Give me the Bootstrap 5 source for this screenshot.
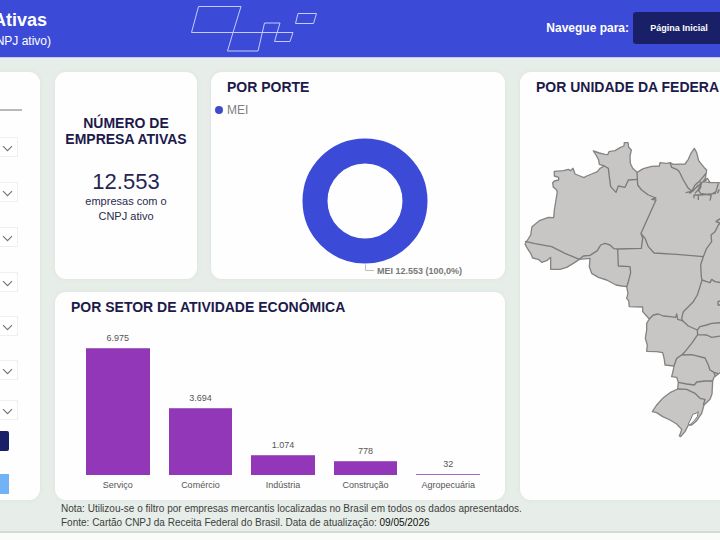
<!DOCTYPE html>
<html lang="pt-BR">
<head>
<meta charset="utf-8">
<meta name="viewport" content="width=device-width, initial-scale=1">
<title>Empresas Ativas</title>
<link href="https://cdn.jsdelivr.net/npm/bootstrap@5.3.0/dist/css/bootstrap.min.css" rel="stylesheet">
<style>
  body { font-family: "Liberation Sans", Arial, sans-serif; background: #fbfcfa; color: #1c1a4b; overflow-x: hidden; }
  .topbar { background: #3c4bd7; height: 58px; border-bottom: 1px solid #c3c9ee; }
  .brand { width: 51px; height: 52px; }
  .brand h1 { font-size: 18px; line-height: 24px; }
  .brand p { font-size: 12px; line-height: 18px; }
  .ornament { width: 128px; height: 50px; margin: 3px 0 0 139px; }
  .nav-caption { font-size: 12px; }
  .btn-home { background: #1a2068; color: #fff; font-size: 9px; font-weight: 700; line-height: 12px; width: 92px; height: 32px; margin-right: -5px; border-radius: 3px; padding: 0; }
  .btn-home:hover { background: #262d80; color: #fff; }
  .board { background: #e7ede8; padding-top: 14px; border-bottom: 2px solid #d3d9d4; }
  .board-grid { display: grid; grid-template-columns: 39px minmax(0, 450fr) minmax(0, 201fr); column-gap: 15px; padding-left: 0; }
  .panel { background: #fefefe; border: 0; border-radius: 11px; box-shadow: 0 0 4px #dbe2dc; }
  .board-grid { grid-template-columns: 40px minmax(0, 450fr) minmax(0, 200fr); }
  .panel-start { border-radius: 0 11px 11px 0; height: 428px; }
  .panel-end { border-radius: 11px 0 0 11px; height: 428px; }
  .panel-title { font-size: 14px; line-height: 16px; font-weight: 700; white-space: nowrap; padding: 7px 0 0 16px; }
  .company-count { padding-top: 43px; }
  .company-count .panel-title { padding: 0; }
  .rule { height: 2px; width: 22px; margin-top: 37px; background: #b9b9b9; }
  .filters { display: grid; grid-template-rows: 45px 45px 45px 44px 44px 40px 20px; margin-top: 26px; }
  .filters .form-select { width: 18px; height: 20px; padding: 0; border: 1px solid #efefef; border-left: 0; border-radius: 0; background-color: #fff; background-position: 2px 5px; background-size: 11px 11px;
    background-image: url("data:image/svg+xml,%3Csvg xmlns='http://www.w3.org/2000/svg' viewBox='0 0 11 11'%3E%3Cpath d='M1 3.2L5.5 7.7L10 3.2' fill='none' stroke='%23777' stroke-width='1.2'/%3E%3C/svg%3E"); }
  .btn-side { width: 9px; height: 20px; padding: 0; border: 0; border-radius: 0 2px 2px 0; }
  .btn-apply { background: #1a2068; margin-top: 11px; }
  .btn-clear { background: #72b2f6; margin-top: 23px; border-radius: 0; }
  .top-cards { display: grid; grid-template-columns: minmax(0, 142fr) minmax(0, 294fr); column-gap: 14px; }
  .top-cards .panel { height: 207px; }
  .sector { height: 208px; margin-top: 13px; }
  .total { font-size: 22px; line-height: 24px; color: #262552; margin-top: 23px; }
  .total-note { font-size: 11px; line-height: 15px; color: #2b2a4d; }
  .legend-dot { width: 8px; height: 8px; background: #3f4cc9; }
  .legend-text { font-size: 12px; line-height: 14px; color: #808080; }
  .donut { width: 164px; height: 150px; }
  .donut text { font: 700 9px "Liberation Sans", Arial, sans-serif; fill: #777; }
  .chart { padding: 0 25px 0 31px; gap: 19px; height: 176px; }
  .chart-col { flex: 1 1 0; min-width: 0; }
  .chart-bar { background: #9237b8; border-top: 1px solid #a565c0; }
  .chart-value { font-size: 9px; line-height: 12px; color: #555; margin-bottom: 4px; }
  .chart-name { font-size: 9px; line-height: 12px; color: #555; margin-top: 4px; white-space: nowrap; }
  .notes { font-size: 10px; line-height: 14px; color: #3d403e; padding: 2px 0 1px 61px; white-space: nowrap; }
  .notes time { color: #111; }
  .map { display: block; width: 100%; height: 320px; margin-top: 35px; }
</style>
</head>
<body>
<header class="topbar d-flex align-items-start text-white">
  <div class="brand d-flex flex-column align-items-end overflow-hidden text-nowrap pt-2">
    <h1 class="fw-bold m-0 pe-1">Ativas</h1>
    <p class="m-0">NPJ ativo)</p>
  </div>
  <svg class="ornament" viewBox="0 0 128 50" fill="none" stroke="#c5cbfa" stroke-width="1" aria-hidden="true">
    <path d="M8.500 3.500H51L43 29.500H1.500ZM43 29.500L37.500 48H68L74.500 20H90L84.500 38.500H100L103 29.500H43M108 10.500H126.500L123.500 20.500H105.500Z"/>
  </svg>
  <div class="d-flex align-items-center ms-auto mt-2 pt-1">
    <span class="nav-caption fw-bold pe-1">Navegue para:</span>
    <button type="button" class="btn btn-home">Página Inicial</button>
  </div>
</header>

<main class="board">
  <div class="board-grid">
    <aside class="panel panel-start overflow-hidden">
      <div class="rule"></div>
      <div class="filters">
        <select class="form-select" aria-label="Filtro 1"></select>
        <select class="form-select" aria-label="Filtro 2"></select>
        <select class="form-select" aria-label="Filtro 3"></select>
        <select class="form-select" aria-label="Filtro 4"></select>
        <select class="form-select" aria-label="Filtro 5"></select>
        <select class="form-select" aria-label="Filtro 6"></select>
        <select class="form-select" aria-label="Filtro 7"></select>
      </div>
      <button type="button" class="btn btn-side btn-apply d-block" aria-label="Aplicar"></button>
      <button type="button" class="btn btn-side btn-clear d-block" aria-label="Limpar"></button>
    </aside>

    <div>
      <div class="top-cards">
        <section class="panel company-count text-center">
          <h2 class="panel-title m-0">NÚMERO DE<br>EMPRESA ATIVAS</h2>
          <div class="total">12.553</div>
          <div class="total-note">empresas com o<br>CNPJ ativo</div>
        </section>
        <section class="panel">
          <h2 class="panel-title m-0">POR PORTE</h2>
          <div class="d-flex align-items-center gap-1 mt-1 pt-1 ps-1">
            <span class="legend-dot rounded-circle"></span>
            <span class="legend-text">MEI</span>
          </div>
          <div class="d-flex justify-content-center">
            <svg class="donut overflow-visible" viewBox="0 0 164 150" role="img" aria-label="MEI 12.553 (100,0%)">
              <circle cx="89" cy="84" r="50" fill="none" stroke="#3c4bd7" stroke-width="25"/>
              <path d="M89.500 147.500V153.500H98" fill="none" stroke="#bbb"/>
              <text x="101" y="157">MEI 12.553 (100,0%)</text>
            </svg>
          </div>
        </section>
      </div>
      <section class="panel sector">
        <h2 class="panel-title m-0">POR SETOR DE ATIVIDADE ECONÔMICA</h2>
        <div class="chart d-flex align-items-end text-center">
          <div class="chart-col"><div class="chart-value">6.975</div><div class="chart-bar" style="height:127px"></div><div class="chart-name">Serviço</div></div>
          <div class="chart-col"><div class="chart-value">3.694</div><div class="chart-bar" style="height:67px"></div><div class="chart-name">Comércio</div></div>
          <div class="chart-col"><div class="chart-value">1.074</div><div class="chart-bar" style="height:20px"></div><div class="chart-name">Indústria</div></div>
          <div class="chart-col"><div class="chart-value">778</div><div class="chart-bar" style="height:14px"></div><div class="chart-name">Construção</div></div>
          <div class="chart-col"><div class="chart-value">32</div><div class="chart-bar" style="height:1px"></div><div class="chart-name">Agropecuária</div></div>
        </div>
      </section>
    </div>

    <section class="panel panel-end overflow-hidden">
      <h2 class="panel-title m-0">POR UNIDADE DA FEDERA</h2>
      <svg class="map" viewBox="30 0 600 960" preserveAspectRatio="xMinYMin meet" role="img" aria-label="Mapa do Brasil" stroke-linejoin="round">
        <path fill="#c8c6c5" stroke="#858483" stroke-width="4" d="M45 342L62 315 66 290 88 272 115 262 131 263 133 240 138 210 142 185 138 178 130 172 128 158 133 153 146 150 146 142 133 138 133 124 160 122 175 118 182 122 189 115 195 132 210 138 222 143 230 138 245 132 262 125 270 115 283 108 268 103 266 90 258 75 250 63 268 69 285 73 293 74 297 65 315 62 330 53 342 48 343 38 354 38 356 52 364 60 360 78 361 100 368 115 381 127 400 116 425 109 448 108 450 98 470 100 480 98 490 103 525 102 535 88 543 70 553 55 560 68 566 92 575 103 583 113 590 120 586 145 580 155 600 158 625 158 640 160V722L630 728 612 742 608 753 606 792 600 808 582 825 575 850 560 872 545 885 535 885 525 905 512 920 508 918 512 908 515 898 500 882 480 870 458 860 440 848 427 845 440 825 460 803 480 788 503 777 505 757 500 742 485 740 490 720 492 708 465 705 463 688 458 668 440 665 410 664 412 645 406 625 410 600 410 580 418 567 410 558 398 545 398 531 358 530 356 512 350 505 354 490 350 470 335 468 318 465 290 450 265 442 245 430 238 410 240 385 208 388 190 400 170 412 150 418 122 418 122 382 110 392 95 397 85 388 68 384 62 370 52 355Z"/>
        <g fill="none" stroke="#7c7b7a" stroke-width="4">
          <path d="M45 334L75 341 125 350 165 370 208 388 220 378 240 376 262 362 272 345 285 340 300 345 312 356 323 357 394 355 398 325 393 310 438 210 425 208 438 204 415 195 395 180 383 165 381 127"/>
          <path d="M283 108L295 115 298 140 302 170 318 187 325 168 345 172 355 150 383 148"/>
          <path d="M393 310L405 325 415 350 432 369 500 373 580 380 590 355 605 335 603 315 615 305 625 285 634 275M617 275L634 264M617 275L634 280"/>
          <path d="M323 357L325 408 360 410 362 428 355 455 350 470"/>
          <path d="M580 380L572 405 574 440 576 450 590 455 600 458 605 448 615 455 634 458M576 450L570 470 562 495 550 515 535 530 520 545 515 565 518 575"/>
          <path d="M418 567L430 555 445 552 460 558 480 560 497 562 500 552 503 568 518 572 535 588 562 600 570 590 590 585 605 580 634 578M634 512L624 515 624 525 634 525"/>
          <path d="M562 600L563 614 590 615 605 622 634 618M563 614L545 640 525 665 515 675M492 708L500 685 515 675 545 674 585 684 595 705 600 720 612 727 624 731"/>
          <path d="M505 757L530 762 553 765 560 756 585 753 608 753M503 777L530 778 555 790 570 805 585 808 580 825M612 727L616 740"/>
          <path d="M480 98L485 112 500 118 508 125 520 150 535 175 545 184 555 165 570 152 588 130"/>
          <path d="M527 188L545 184 560 172 575 158 590 150M538 190L550 182 565 165M570 155L573 170 566 183 572 190 600 195 618 185 625 160M580 155L592 145 600 158M552 205L552 195 572 195 618 190M565 195L565 210M600 212L604 195M575 160L565 178 555 190M628 178L622 190"/>
        </g>
        <path fill="#fefefe" stroke="#7c7b7a" stroke-width="3" d="M535 882L544 864 548 853 558 850 565 845 562 860 550 875 540 884Z"/>
      </svg>
    </section>
  </div>
  <footer class="notes">
    <div>Nota: Utilizou-se o filtro por empresas mercantis localizadas no Brasil em todos os dados apresentados.</div>
    <div>Fonte: Cartão CNPJ da Receita Federal do Brasil. Data de atualização: <time datetime="2026-05-09">09/05/2026</time></div>
  </footer>
</main>
<script src="https://cdn.jsdelivr.net/npm/bootstrap@5.3.0/dist/js/bootstrap.bundle.min.js"></script>
</body>
</html>
